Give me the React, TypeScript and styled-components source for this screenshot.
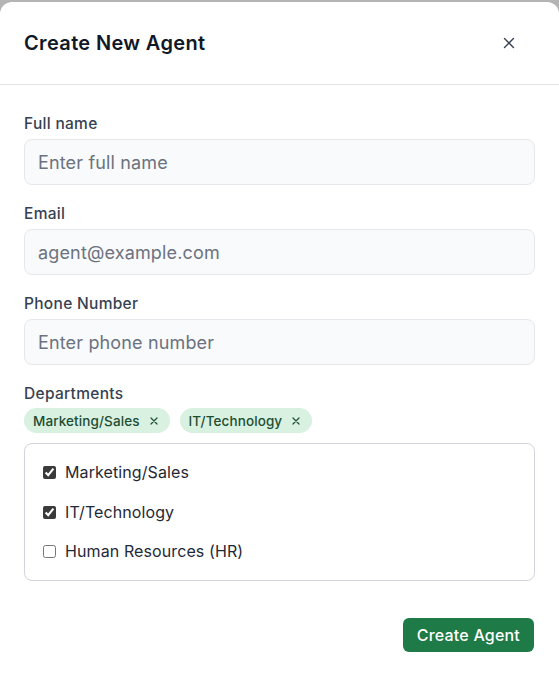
import React from 'react'
import styled, { createGlobalStyle } from 'styled-components'

const GlobalStyle = createGlobalStyle`
  html, body {
    margin: 0;
    padding: 0;
    background: #b4b4b4;
    font-family: 'Inter', 'Liberation Sans', sans-serif;
  }
  * { box-sizing: border-box; }
`

const departments = ['Marketing/Sales', 'IT/Technology', 'Human Resources (HR)']

const App: React.FC = () => {
  const [selected, setSelected] = React.useState<string[]>(['Marketing/Sales', 'IT/Technology'])

  const toggle = (d: string) =>
    setSelected(s => (s.includes(d) ? s.filter(x => x !== d) : [...s, d]))

  return (
    <>
      <GlobalStyle />
      <Modal>
        <Header>
          <Title>Create New Agent</Title>
          <CloseButton aria-label='Close'>
            <svg width='12' height='12' viewBox='0 0 12 12'>
              <path d='M1.5 1.5 L10.5 10.5 M10.5 1.5 L1.5 10.5' stroke='#374151' strokeWidth='1.4' strokeLinecap='round' />
            </svg>
          </CloseButton>
        </Header>
        <Body>
          <Field>
            <Label>Full name</Label>
            <Input placeholder='Enter full name' />
          </Field>
          <Field>
            <Label>Email</Label>
            <Input placeholder='agent@example.com' />
          </Field>
          <Field>
            <Label>Phone Number</Label>
            <Input placeholder='Enter phone number' />
          </Field>
          <Field>
            <Label>Departments</Label>
            <ChipRow>
              {selected.map(d => (
                <Chip key={d}>
                  {d}
                  <ChipRemove onClick={() => toggle(d)}>
                    <svg width='8' height='8' viewBox='0 0 8 8'>
                      <path d='M1 1 L7 7 M7 1 L1 7' stroke='#1f4d33' strokeWidth='1.2' strokeLinecap='round' />
                    </svg>
                  </ChipRemove>
                </Chip>
              ))}
            </ChipRow>
            <OptionList>
              {departments.map(d => (
                <Option key={d}>
                  <Checkbox type='checkbox' checked={selected.includes(d)} onChange={() => toggle(d)} />
                  {d}
                </Option>
              ))}
            </OptionList>
          </Field>
        </Body>
        <Footer>
          <PrimaryButton>Create Agent</PrimaryButton>
        </Footer>
      </Modal>
    </>
  )
}

const Modal = styled.div`
  margin-top: 2px;
  background: #ffffff;
  border-radius: 12px 12px 0 0;
  width: 559px;
  min-height: 675px;
  display: flex;
  flex-direction: column;
`

const Header = styled.div`
  display: flex;
  align-items: center;
  justify-content: space-between;
  height: 83px;
  padding: 0 24px;
  border-bottom: 1px solid #e5e7eb;
`

const Title = styled.h2`
  margin: 0;
  font-size: 20px;
  font-weight: 600;
  color: #111827;
  letter-spacing: 0.35px;
`

const CloseButton = styled.button`
  background: none;
  border: 0;
  padding: 6px;
  margin-right: 14px;
  display: flex;
  cursor: pointer;
`

const Body = styled.div`
  display: flex;
  flex-direction: column;
  gap: 20px;
  padding: 30px 24px 0;
`

const Field = styled.div`
  display: flex;
  flex-direction: column;
  gap: 6px;
`

const Label = styled.label`
  font-size: 15.5px;
  font-weight: 500;
  color: #374151;
  line-height: 18px;
  letter-spacing: 0.3px;
`

const Input = styled.input`
  height: 46px;
  width: 100%;
  border: 1px solid #e5e7eb;
  border-radius: 8px;
  background: #f9fafb;
  padding: 0 13px;
  font-family: inherit;
  font-size: 18px;
  color: #111827;
  outline: none;
  letter-spacing: 0.15px;
  &::placeholder {
    color: #6b7280;
  }
`

const ChipRow = styled.div`
  display: flex;
  gap: 10px;
  margin-top: -1px;
`

const Chip = styled.span`
  display: inline-flex;
  align-items: center;
  gap: 10px;
  height: 25px;
  padding: 0 12px 0 9px;
  border-radius: 999px;
  background: #d8f1e0;
  color: #1f4d33;
  font-size: 13.5px;
  font-weight: 500;
  letter-spacing: 0.1px;
`

const ChipRemove = styled.button`
  background: none;
  border: 0;
  padding: 0;
  display: flex;
  cursor: pointer;
`

const OptionList = styled.div`
  margin-top: 4px;
  border: 1px solid #d1d5db;
  border-radius: 8px;
  padding: 17px 18px 17px;
  display: flex;
  flex-direction: column;
  gap: 16.5px;
`

const Option = styled.label`
  display: flex;
  align-items: center;
  gap: 9px;
  font-size: 16px;
  color: #1f2937;
  line-height: 23px;
  letter-spacing: 0.1px;
  cursor: pointer;
`

const Checkbox = styled.input`
  margin: 0;
  width: 13px;
  height: 13px;
  accent-color: #3a3a3a;
`

const Footer = styled.div`
  display: flex;
  justify-content: flex-end;
  padding: 37px 25px 0;
`

const PrimaryButton = styled.button`
  background: #1e7a46;
  color: #ffffff;
  border: 0;
  border-radius: 6px;
  height: 34px;
  padding: 0 14px;
  font-family: inherit;
  font-size: 16px;
  font-weight: 500;
  letter-spacing: 0.2px;
  cursor: pointer;
`

export default App
